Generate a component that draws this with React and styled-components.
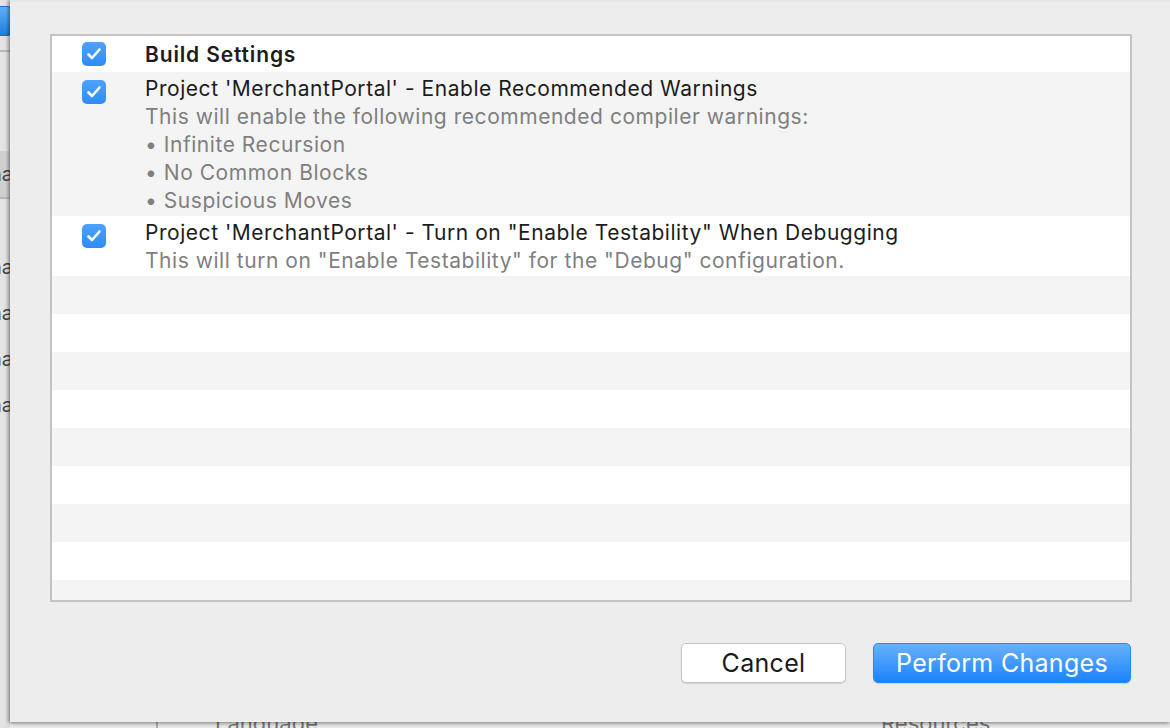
import React from 'react';
import styled, { createGlobalStyle } from 'styled-components';

const Global = createGlobalStyle`
  html, body {
    margin: 0;
    padding: 0;
    background: #ececec;
    font-family: Inter, "Noto Sans", "Liberation Sans", sans-serif;
  }
`;

const Screen = styled.div`
  width: 1170px;
  height: 728px;
  display: flex;
  overflow: hidden;
  background: #ececec;
`;

/* background window peeking out at the left edge */
const LeftPeek = styled.div`
  width: 10px;
  flex: 0 0 10px;
  display: flex;
  flex-direction: column;
  background: linear-gradient(to right, #e6e6e6, #dcdcdc);
  overflow: hidden;
`;

const PeekIcon = styled.div`
  margin: 6px 0 0 -14px;
  width: 24px;
  height: 28px;
  border-radius: 4px;
  background: linear-gradient(#5fb0f5, #1d7fe0);
  border: 1px solid #1b6ec4;
`;

const PeekLine = styled.div`
  height: 2px;
  background: #b8b8b8;
  margin-top: ${(p) => p.$top}px;
`;

const PeekSelected = styled.div`
  margin-top: ${(p) => p.$top}px;
  height: 46px;
  background: #cfcfcf;
  display: flex;
  align-items: center;
`;

const PeekText = styled.div`
  margin-top: ${(p) => p.$top || 0}px;
  margin-left: -10px;
  font-size: 20px;
  line-height: 24px;
  color: #444;
  white-space: nowrap;
`;

const Main = styled.div`
  flex: 1;
  display: flex;
  flex-direction: column;
`;

const Sheet = styled.div`
  height: 722px;
  flex: 0 0 722px;
  background: #ededed;
  border-top: 2px solid #e6e6e6;
  box-sizing: border-box;
  box-shadow: -2px 0 3px rgba(0, 0, 0, 0.25), 0 2px 4px rgba(0, 0, 0, 0.3);
  display: flex;
  flex-direction: column;
  padding: 32px 38px 0 40px;
  position: relative;
  z-index: 1;
`;

const Table = styled.div`
  height: 568px;
  border: 2px solid #c3c3c3;
  box-sizing: border-box;
  overflow: hidden;
  display: flex;
  flex-direction: column;
`;

const Row = styled.div`
  display: flex;
  align-items: flex-start;
  flex: 0 0 auto;
  height: ${(p) => p.$h}px;
  box-sizing: border-box;
  padding-top: ${(p) => p.$pad}px;
  background: ${(p) => (p.$alt ? '#f4f4f4' : '#ffffff')};
`;

const CheckCell = styled.div`
  width: 93px;
  flex: 0 0 93px;
  padding-left: 30px;
  box-sizing: border-box;
  padding-top: ${(p) => p.$off}px;
`;

const Check = styled.div`
  width: 24px;
  height: 24px;
  border-radius: 5px;
  background: linear-gradient(#4da2fa, #2e8cf7);
  display: flex;
  align-items: center;
  justify-content: center;
`;

const TextCell = styled.div`
  display: flex;
  flex-direction: column;
  padding-top: 1px;
`;

const Title = styled.div`
  font-size: 21px;
  line-height: 28px;
  color: #1c1c1c;
  font-weight: ${(p) => (p.$bold ? 600 : 400)};
  letter-spacing: ${(p) => (p.$bold ? 0.85 : 0.54)}px;
  white-space: nowrap;
`;

const Desc = styled.div`
  font-size: 21px;
  line-height: 28px;
  letter-spacing: 0.54px;
  color: #7f7f7f;
  white-space: nowrap;
`;

const Buttons = styled.div`
  display: flex;
  justify-content: flex-end;
  gap: 27px;
  margin-top: 41px;
  padding-right: 1px;
`;

const Button = styled.button`
  height: 40px;
  width: ${(p) => p.$w}px;
  border-radius: 5px;
  font-family: inherit;
  font-size: 25px;
  letter-spacing: 0.3px;
  cursor: pointer;
  box-sizing: border-box;
  border: 1px solid ${(p) => (p.$primary ? '#2a88f5' : '#c6c6c6')};
  color: ${(p) => (p.$primary ? '#ffffff' : '#1a1a1a')};
  background: ${(p) =>
    p.$primary ? 'linear-gradient(#69b1fc, #1a83fb)' : '#ffffff'};
  box-shadow: 0 1px 1px rgba(0, 0, 0, 0.12);
`;

const BottomPeek = styled.div`
  flex: 1;
  background: #ececec;
  display: flex;
  align-items: flex-start;
  overflow: hidden;
  position: relative;
`;

const PeekDivider = styled.div`
  width: 2px;
  height: 10px;
  margin-left: 146px;
  background: #b0b0b0;
`;

const PeekLabel = styled.div`
  margin-top: -11px;
  margin-left: ${(p) => p.$left}px;
  font-size: 22px;
  line-height: 24px;
  color: #777;
  white-space: nowrap;
`;

const Tick = () => (
  <svg width="16" height="14" viewBox="0 0 16 14">
    <path
      d="M2.5 7.5 L6 11 L13.5 2.5"
      fill="none"
      stroke="#fff"
      strokeWidth="2.6"
      strokeLinecap="round"
      strokeLinejoin="round"
    />
  </svg>
);

const items = [
  { title: 'Build Settings', bold: true, lines: [], h: 36, pad: 4, off: 2 },
  {
    title: "Project 'MerchantPortal' - Enable Recommended Warnings",
    lines: [
      'This will enable the following recommended compiler warnings:',
      '• Infinite Recursion',
      '• No Common Blocks',
      '• Suspicious Moves',
    ],
    h: 144,
    pad: 2,
    off: 6,
  },
  {
    title: 'Project \'MerchantPortal\' - Turn on "Enable Testability" When Debugging',
    lines: ['This will turn on "Enable Testability" for the "Debug" configuration.'],
    h: 60,
    pad: 2,
    off: 6,
  },
];

export default function App() {
  return (
    <Screen>
      <Global />
      <LeftPeek>
        <PeekIcon />
        <PeekLine $top={14} />
        <PeekSelected $top={99}>
          <PeekText>na</PeekText>
        </PeekSelected>
        <PeekLine $top={0} />
        <PeekText $top={56}>na</PeekText>
        <PeekText $top={22}>na</PeekText>
        <PeekText $top={22}>na</PeekText>
        <PeekText $top={22}>na</PeekText>
      </LeftPeek>
      <Main>
        <Sheet>
          <Table>
            {items.map((it, i) => (
              <Row key={i} $h={it.h} $pad={it.pad} $alt={i % 2 === 1}>
                <CheckCell $off={it.off}>
                  <Check>
                    <Tick />
                  </Check>
                </CheckCell>
                <TextCell>
                  <Title $bold={it.bold}>{it.title}</Title>
                  {it.lines.map((l, j) => (
                    <Desc key={j}>{l}</Desc>
                  ))}
                </TextCell>
              </Row>
            ))}
            {Array.from({ length: 9 }).map((_, i) => (
              <Row key={'e' + i} $h={38} $pad={0} $alt={i % 2 === 0} />
            ))}
          </Table>
          <Buttons>
            <Button $w={165}>Cancel</Button>
            <Button $w={258} $primary>
              Perform Changes
            </Button>
          </Buttons>
        </Sheet>
        <BottomPeek>
          <PeekDivider />
          <PeekLabel $left={57}>Language</PeekLabel>
          <PeekLabel $left={563}>Resources</PeekLabel>
        </BottomPeek>
      </Main>
    </Screen>
  );
}
